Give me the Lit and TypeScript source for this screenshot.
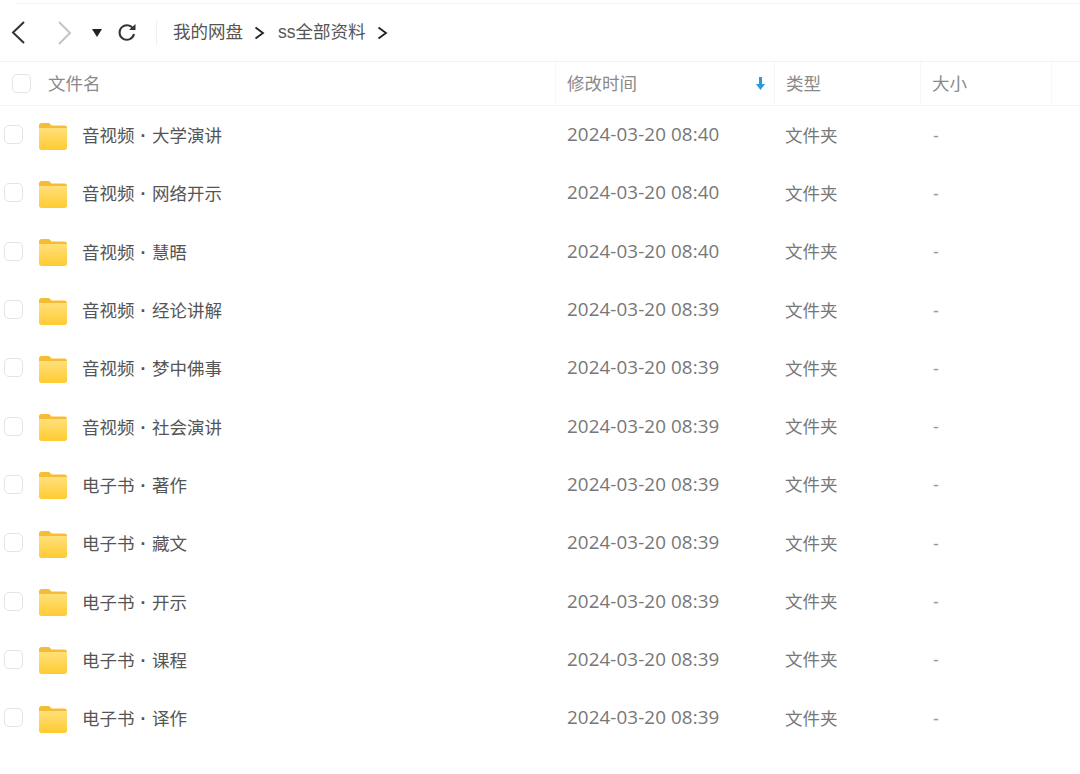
import { LitElement, html, css, svg } from "lit";
import { customElement } from "lit/decorators.js";

const rows: [string, string, string][] = [
  ["音视频", "大学演讲", "08:40"],
  ["音视频", "网络开示", "08:40"],
  ["音视频", "慧晤", "08:40"],
  ["音视频", "经论讲解", "08:39"],
  ["音视频", "梦中佛事", "08:39"],
  ["音视频", "社会演讲", "08:39"],
  ["电子书", "著作", "08:39"],
  ["电子书", "藏文", "08:39"],
  ["电子书", "开示", "08:39"],
  ["电子书", "课程", "08:39"],
  ["电子书", "译作", "08:39"],
];

const folder = html`<svg class="folder" width="30" height="29" viewBox="0 0 30 29">
  <defs><linearGradient id="fg" x1="0" y1="0" x2="0" y2="1">
    <stop offset="0" stop-color="#ffe07a"/><stop offset="1" stop-color="#ffcb32"/>
  </linearGradient></defs>
  <path d="M1 3.500C1 2 2 1 3.500 1H10c1.200 0 1.800.5 2.600 1.500l.9 1H26.500C28 3.500 29 4.500 29 6V10H1z" fill="#f5bd35"/>
  <path d="M1 6h28v19.500c0 1.600-1 2.500-2.500 2.500h-23C2 28 1 27.100 1 25.500z" fill="url(#fg)"/>
</svg>`;

const chevron = (d: string, color: string, w: number, h: number, sw: number) =>
  html`<svg width=${w} height=${h} viewBox="0 0 ${w} ${h}" fill="none">${svg`<path d=${d} stroke=${color} stroke-width=${sw}/>`}</svg>`;

@customElement("app-root")
export class AppRoot extends LitElement {
  static styles = css`
    :host {
      display: block;
      width: 1080px;
      height: 774px;
      background: #fff;
      overflow: hidden;
      font-family: "Liberation Sans", "Noto Sans CJK SC", sans-serif;
      font-size: 17.5px;
      color: #666;
    }
    .topline { height: 3px; margin-left: 16px; border-bottom: 1px solid #f4f4f4; box-sizing: content-box; }
    .toolbar {
      height: 57px;
      display: flex;
      align-items: center;
      border-bottom: 1px solid #f1f1f1;
      padding-left: 10px;
      box-sizing: content-box;
    }
    .toolbar svg { display: block; flex: none; }
    .fwd { margin-left: 30px; }
    .caret { margin-left: 20px; }
    .refresh { margin-left: 15px; }
    .sep { width: 1px; height: 24px; background: #efefef; margin: 0 16px 0 19px; }
    .crumb { color: #555; line-height: 24px; margin-top: -2px; }
    .crumb-arrow { margin: 0 12px 0 11px; }
    .crumb-arrow.first { margin-right: 13px; }
    .head {
      height: 43px;
      display: grid;
      grid-template-columns: 555px 219px 146px 131px 29px;
      border-bottom: 1px solid #f4f4f4;
      color: #8a8a8a;
    }
    .head > div { display: flex; align-items: center; border-left: 1px solid #f6f6f6; padding-left: 11px; position: relative; }
    .head > div:first-child { border-left: 0; padding-left: 12px; gap: 17px; }
    .htext { margin-top: -2px; }
    .arrow { position: absolute; right: 8px; top: 15px; }
    .cb {
      width: 19px;
      height: 19px;
      box-sizing: border-box;
      border: 1.5px solid #e4e4e6;
      border-radius: 5px;
      background: #fff;
      flex: none;
    }
    .rows { padding-top: 1px; }
    .row {
      height: 58.3px;
      display: grid;
      grid-template-columns: 555px 219px 146px 132px;
      align-items: center;
    }
    .name { display: flex; align-items: center; padding-left: 4px; color: #555; }
    .name .cb { margin-top: -3px; }
    .folder { margin-left: 15px; margin-right: 15px; flex: none; }
    .label { margin-top: -3px; margin-left: -1px; word-spacing: 1px; }
    .dot { font-weight: 700; }
    .time { padding-left: 12px; color: #777; font-size: 18.8px; font-family: "Open Sans", "Noto Sans", sans-serif; letter-spacing: 0.1px; margin-top: -4px; }
    .type { padding-left: 11px; color: #777; margin-top: -4px; }
    .size { padding-left: 13px; color: #999; margin-top: 0; }
  `;

  render() {
    return html`
      <div class="topline"></div>
      <div class="toolbar">
        ${chevron("M14 3 3 13.500 14 24", "#333", 16, 27, 2)}
        <span class="fwd">${chevron("M3 3l11 11L3 25", "#c4c4c4", 16, 27, 2)}</span>
        <svg class="caret" width="10" height="8" viewBox="0 0 10 8"><path d="M0 0h10L5 8z" fill="#222"/></svg>
        <svg class="refresh" width="20" height="20" viewBox="0 0 20 20" fill="none">
          <path d="M16.500 6.500A7.300 7.300 0 1 0 17 11" stroke="#333" stroke-width="2"/>
          <path d="M12 7h6.500V1z" fill="#333"/>
        </svg>
        <div class="sep"></div>
        <span class="crumb">我的网盘</span>
        <span class="crumb-arrow first">${chevron("M1.500 1.500 9 7l-7.500 5.500", "#222", 11, 14, 1.8)}</span>
        <span class="crumb">ss全部资料</span>
        <span class="crumb-arrow">${chevron("M1.500 1.500 9 7l-7.500 5.500", "#222", 11, 14, 1.8)}</span>
      </div>
      <div class="head">
        <div><span class="cb"></span><span class="htext">文件名</span></div>
        <div><span class="htext">修改时间</span>
          <svg class="arrow" width="11" height="14" viewBox="0 0 11 14"><path d="M4 0h3v7h3l-4.500 6L1 7h3z" fill="#2b9ad8"/></svg>
        </div>
        <div><span class="htext">类型</span></div>
        <div><span class="htext">大小</span></div>
        <div></div>
      </div>
      <div class="rows">
        ${rows.map(
          ([a, b, t]) => html`<div class="row">
            <div class="name"><span class="cb"></span>${folder}<span class="label">${a} <span class="dot">·</span> ${b}</span></div>
            <div class="time">2024-03-20 ${t}</div>
            <div class="type">文件夹</div>
            <div class="size">-</div>
          </div>`
        )}
      </div>
    `;
  }
}
